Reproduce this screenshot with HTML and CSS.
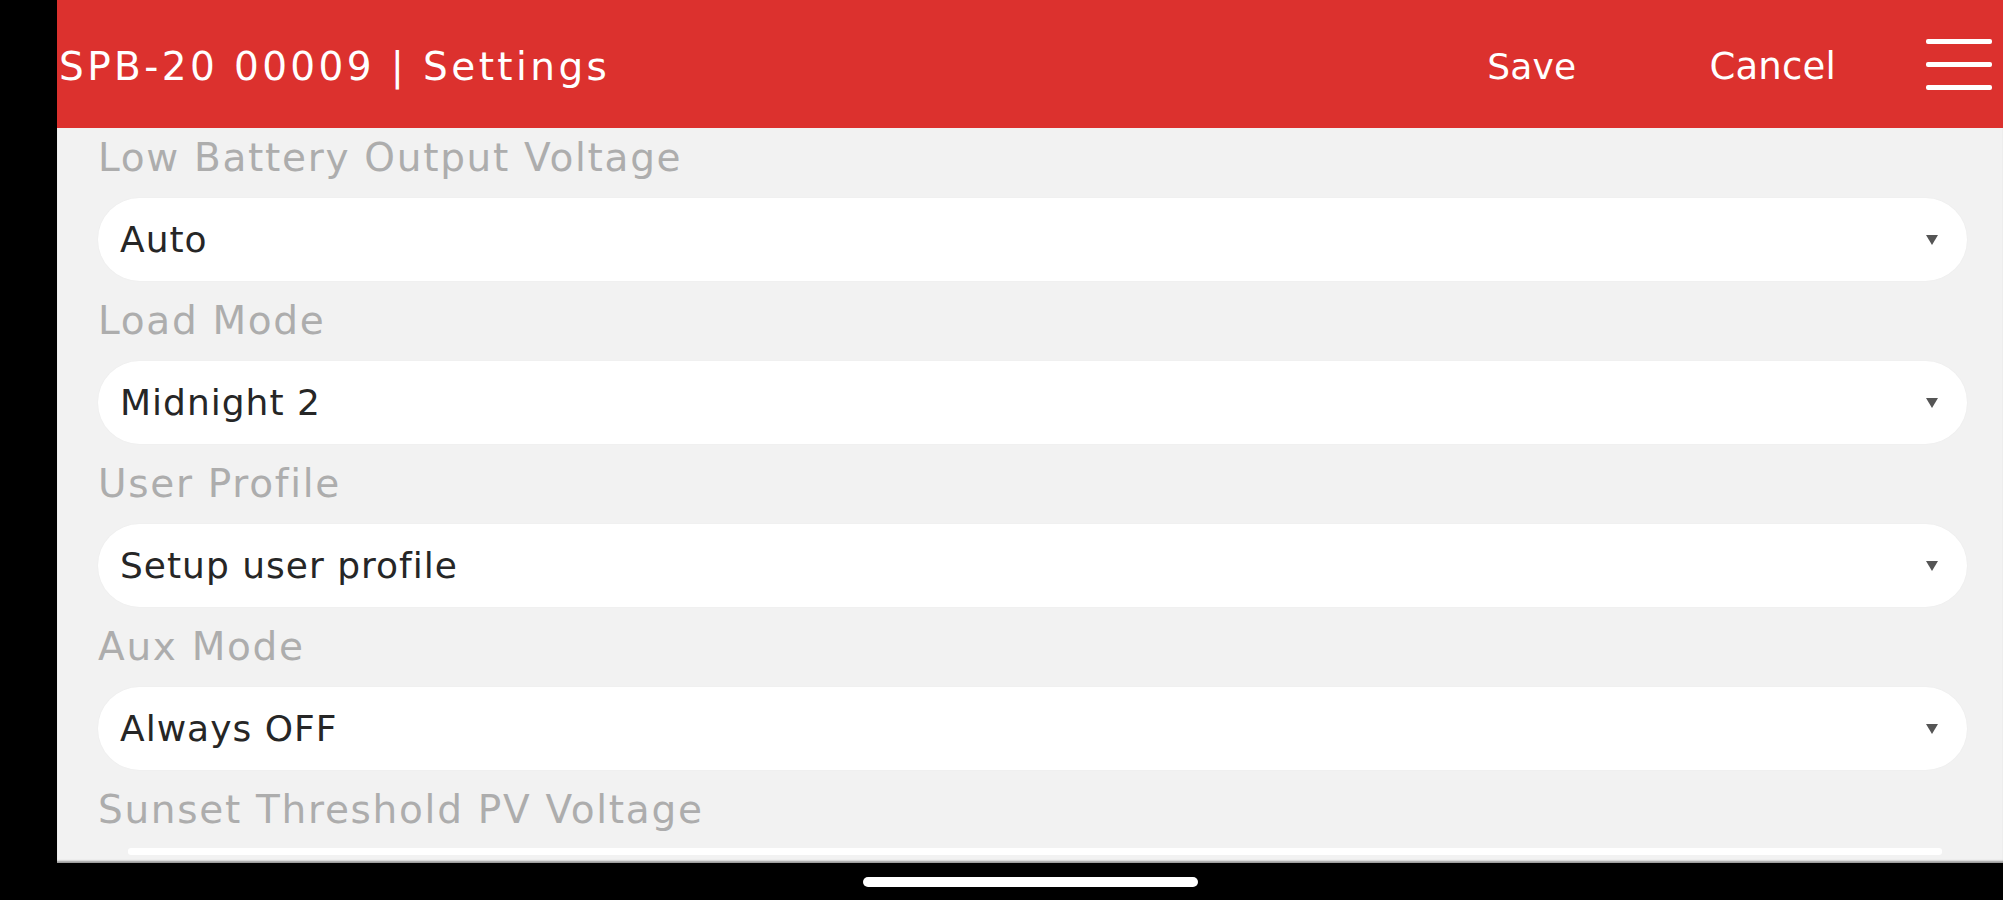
FILE: index.html
```html
<!DOCTYPE html>
<html lang="en">
<head>
<meta charset="utf-8">
<title>SPB-20 00009 | Settings</title>
<link rel="stylesheet" href="styles.css">
</head>
<body>
<div class="device">
  <div class="screen">
    <header class="topbar">
      <h1 class="title">SPB-20 00009 | Settings</h1>
      <nav class="actions">
        <span class="action save">Save</span>
        <span class="action cancel">Cancel</span>
        <span class="menu" aria-label="Menu"><i></i><i></i><i></i></span>
      </nav>
    </header>
    <main class="form">
      <div class="field">
        <label class="label">Low Battery Output Voltage</label>
        <div class="select"><span class="value">Auto</span><span class="caret"></span></div>
      </div>
      <div class="field">
        <label class="label">Load Mode</label>
        <div class="select"><span class="value">Midnight 2</span><span class="caret"></span></div>
      </div>
      <div class="field">
        <label class="label">User Profile</label>
        <div class="select"><span class="value">Setup user profile</span><span class="caret"></span></div>
      </div>
      <div class="field">
        <label class="label">Aux Mode</label>
        <div class="select"><span class="value">Always OFF</span><span class="caret"></span></div>
      </div>
      <div class="field">
        <label class="label">Sunset Threshold PV Voltage</label>
        <div class="input"></div>
      </div>
    </main>
  </div>
  <div class="home-area"><span class="home-bar"></span></div>
</div>
</body>
</html>
```

FILE: styles.css
```css
* { box-sizing: border-box; }

html, body {
  margin: 0;
  padding: 0;
  background: #000;
}

body {
  font-family: "DejaVu Sans", "Liberation Sans", sans-serif;
}

.device {
  width: 2003px;
  height: 900px;
  padding-left: 57px;
  background: #000;
  display: flex;
  flex-direction: column;
}

.screen {
  height: 863px;
  background: #f2f2f2;
  overflow: hidden;
  display: flex;
  flex-direction: column;
  box-shadow: inset 0 -3px 2px -1px #9a9a9a;
}

.topbar {
  flex: 0 0 128px;
  background: #dc312e;
  display: flex;
  align-items: center;
  padding: 4px 11px 0 2px;
  color: #fff;
}

.title {
  flex: 1;
  margin: 0;
  font-weight: normal;
  font-size: 39px;
  letter-spacing: 3.4px;
  white-space: nowrap;
}

.actions {
  display: flex;
  align-items: center;
}

.action {
  font-size: 36px;
  letter-spacing: 0.2px;
}

.save { margin-right: 133px; }
.cancel { margin-right: 90px; font-size: 37px; }

.menu {
  width: 66px;
  display: flex;
  flex-direction: column;
  gap: 18px;
  margin-top: -4px;
}

.menu i {
  display: block;
  height: 5px;
  background: #fff;
  border-radius: 2px;
}

.form {
  margin-top: -10px;
  padding: 0 36px 0 41px;
}

.label {
  display: block;
  height: 80px;
  line-height: 80px;
  font-size: 39px;
  letter-spacing: 1.7px;
  color: #adadad;
  white-space: nowrap;
}

.select {
  height: 83px;
  border-radius: 42px;
  background: #fff;
  display: flex;
  align-items: center;
  padding: 0 29px 0 22px;
  box-shadow: 0 0 2px rgba(0,0,0,0.04);
}

.value {
  flex: 1;
  font-size: 36px;
  letter-spacing: 1px;
  color: #262626;
}

.caret {
  width: 0;
  height: 0;
  border-left: 6px solid transparent;
  border-right: 6px solid transparent;
  border-top: 10px solid #555;
}

.input {
  height: 7px;
  margin: -2px 25px 0 30px;
  background: #fff;
  border-radius: 3px;
}

.home-area {
  flex: 1;
  display: flex;
  justify-content: center;
  align-items: flex-start;
  padding-top: 14px;
}

.home-bar {
  width: 335px;
  height: 10px;
  border-radius: 5px;
  background: #fff;
}
```
